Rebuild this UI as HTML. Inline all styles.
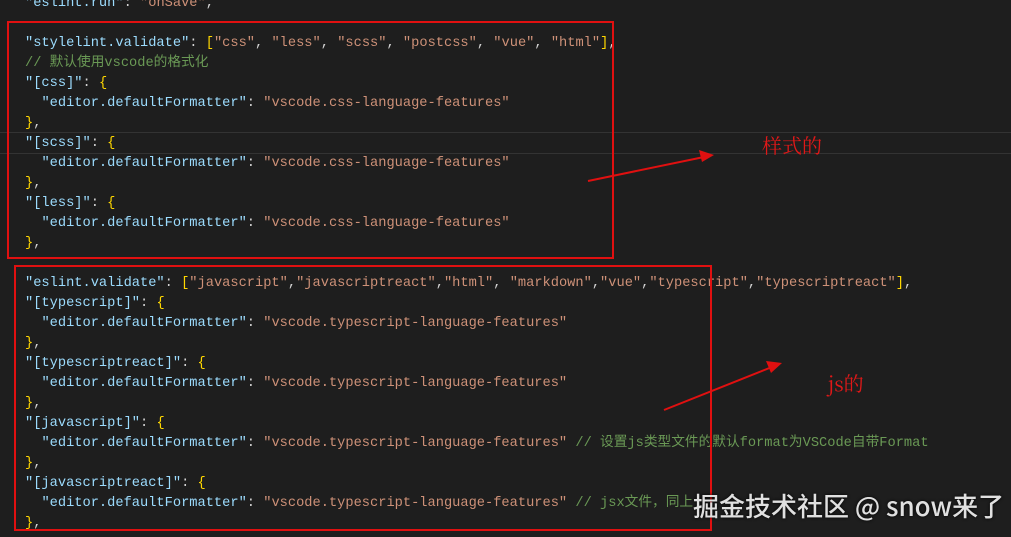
<!DOCTYPE html>
<html><head><meta charset="utf-8"><style>
html,body{margin:0;padding:0;background:#1e1e1e;width:1011px;height:537px;overflow:hidden;position:relative}
.code{position:absolute;left:25px;top:-6px;font-family:"Liberation Mono","Noto Sans CJK SC",monospace;font-size:13.7px;line-height:20px;color:#d4d4d4;white-space:pre}
.k{color:#9cdcfe}.s{color:#ce9178}.y{color:#ffd700}.c{color:#6a9955}
.box{position:absolute;border:2px solid #e01010}
.lbl{position:absolute;color:#e01818;font-family:"Noto Serif CJK SC",serif;font-size:20px}
.wm{position:absolute;left:693px;top:487px;white-space:nowrap;color:#e0e0e0;font-family:"Noto Sans CJK SC",sans-serif;font-size:26px;font-weight:500;text-shadow:0 0 3px #000}
.hl{position:absolute;left:0;width:1011px;top:132px;height:20px;border-top:1px solid #333;border-bottom:1px solid #333}
</style></head><body>
<div class="hl"></div>
<div class="code"><span class="k">"eslint.run"</span>: <span class="s">"onSave"</span>,

<span class="k">"stylelint.validate"</span>: <span class="y">[</span><span class="s">"css"</span>, <span class="s">"less"</span>, <span class="s">"scss"</span>, <span class="s">"postcss"</span>, <span class="s">"vue"</span>, <span class="s">"html"</span><span class="y">]</span>,
<span class="c">// 默认使用vscode的格式化</span>
<span class="k">"[css]"</span>: <span class="y">{</span>
  <span class="k">"editor.defaultFormatter"</span>: <span class="s">"vscode.css-language-features"</span>
<span class="y">}</span>,
<span class="k">"[scss]"</span>: <span class="y">{</span>
  <span class="k">"editor.defaultFormatter"</span>: <span class="s">"vscode.css-language-features"</span>
<span class="y">}</span>,
<span class="k">"[less]"</span>: <span class="y">{</span>
  <span class="k">"editor.defaultFormatter"</span>: <span class="s">"vscode.css-language-features"</span>
<span class="y">}</span>,

<span class="k">"eslint.validate"</span>: <span class="y">[</span><span class="s">"javascript"</span>,<span class="s">"javascriptreact"</span>,<span class="s">"html"</span>, <span class="s">"markdown"</span>,<span class="s">"vue"</span>,<span class="s">"typescript"</span>,<span class="s">"typescriptreact"</span><span class="y">]</span>,
<span class="k">"[typescript]"</span>: <span class="y">{</span>
  <span class="k">"editor.defaultFormatter"</span>: <span class="s">"vscode.typescript-language-features"</span>
<span class="y">}</span>,
<span class="k">"[typescriptreact]"</span>: <span class="y">{</span>
  <span class="k">"editor.defaultFormatter"</span>: <span class="s">"vscode.typescript-language-features"</span>
<span class="y">}</span>,
<span class="k">"[javascript]"</span>: <span class="y">{</span>
  <span class="k">"editor.defaultFormatter"</span>: <span class="s">"vscode.typescript-language-features"</span> <span class="c">// 设置js类型文件的默认format为VSCode自带Format</span>
<span class="y">}</span>,
<span class="k">"[javascriptreact]"</span>: <span class="y">{</span>
  <span class="k">"editor.defaultFormatter"</span>: <span class="s">"vscode.typescript-language-features"</span> <span class="c">// jsx文件，同上</span>
<span class="y">}</span>,</div>
<div class="box" style="left:7px;top:21px;width:603px;height:234px"></div>
<div class="box" style="left:14px;top:265px;width:694px;height:262px"></div>
<svg style="position:absolute;left:0;top:0" width="1011" height="537">
<g stroke="#e01010" stroke-width="2" fill="#e01010">
<line x1="588" y1="181" x2="704" y2="157"/>
<polygon points="714,155 699,150 702,162" stroke="none"/>
<line x1="664" y1="410" x2="772" y2="367"/>
<polygon points="782,363 766,361 771,373" stroke="none"/>
</g></svg>
<div class="lbl" style="left:762px;top:130px">样式的</div>
<div class="lbl" style="left:828px;top:368px">js的</div>
<div class="wm">掘金技术社区 @ snow来了</div>
</body></html>
